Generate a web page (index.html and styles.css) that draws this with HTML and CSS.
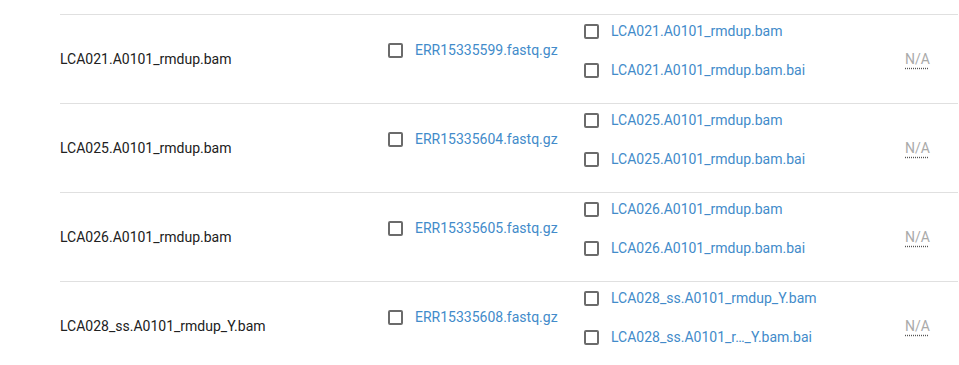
FILE: index.html
```html
<!DOCTYPE html>
<html>
<head>
<meta charset="utf-8">
<link rel="stylesheet" href="styles.css">
</head>
<body>
<div class="table">
  <div class="row">
    <div class="c-name">LCA021.A0101_rmdup.bam</div>
    <div class="c-raw"><div class="item"><span class="box"></span><a class="link">ERR15335599.fastq.gz</a></div></div>
    <div class="c-files">
      <div class="item"><span class="box"></span><a class="link">LCA021.A0101_rmdup.bam</a></div>
      <div class="item"><span class="box"></span><a class="link">LCA021.A0101_rmdup.bam.bai</a></div>
    </div>
    <div class="c-na"><span class="na">N/A</span></div>
  </div>
  <div class="row">
    <div class="c-name">LCA025.A0101_rmdup.bam</div>
    <div class="c-raw"><div class="item"><span class="box"></span><a class="link">ERR15335604.fastq.gz</a></div></div>
    <div class="c-files">
      <div class="item"><span class="box"></span><a class="link">LCA025.A0101_rmdup.bam</a></div>
      <div class="item"><span class="box"></span><a class="link">LCA025.A0101_rmdup.bam.bai</a></div>
    </div>
    <div class="c-na"><span class="na">N/A</span></div>
  </div>
  <div class="row">
    <div class="c-name">LCA026.A0101_rmdup.bam</div>
    <div class="c-raw"><div class="item"><span class="box"></span><a class="link">ERR15335605.fastq.gz</a></div></div>
    <div class="c-files">
      <div class="item"><span class="box"></span><a class="link">LCA026.A0101_rmdup.bam</a></div>
      <div class="item"><span class="box"></span><a class="link">LCA026.A0101_rmdup.bam.bai</a></div>
    </div>
    <div class="c-na"><span class="na">N/A</span></div>
  </div>
  <div class="row">
    <div class="c-name">LCA028_ss.A0101_rmdup_Y.bam</div>
    <div class="c-raw"><div class="item"><span class="box"></span><a class="link">ERR15335608.fastq.gz</a></div></div>
    <div class="c-files">
      <div class="item"><span class="box"></span><a class="link">LCA028_ss.A0101_rmdup_Y.bam</a></div>
      <div class="item"><span class="box"></span><a class="link">LCA028_ss.A0101_r…_Y.bam.bai</a></div>
    </div>
    <div class="c-na"><span class="na">N/A</span></div>
  </div>
</div>
</body>
</html>
```
FILE: styles.css
```css
html, body {
  margin: 0;
  padding: 0;
  background: #fff;
}
body {
  font-family: Roboto, "Liberation Sans", sans-serif;
  font-size: 14px;
  line-height: 20px;
  color: #212121;
  overflow: hidden;
}
.table {
  padding: 14px 1px 0 60px;
}
.row {
  display: flex;
  height: 88px;
  border-top: 1px solid #e0e0e0;
}
.c-name {
  width: 328px;
  display: flex;
  align-items: center;
}
.c-raw {
  width: 196px;
  padding-top: 25px;
  box-sizing: border-box;
}
.c-files {
  width: 321px;
  padding-top: 6px;
  box-sizing: border-box;
  display: flex;
  flex-direction: column;
  gap: 19px;
}
.c-na {
  flex: 1;
  display: flex;
  align-items: center;
}
.item {
  display: flex;
  align-items: center;
  height: 20px;
}
.box {
  width: 15px;
  height: 15px;
  box-sizing: border-box;
  border: 2px solid #6b6b6b;
  border-radius: 2px;
  margin-right: 12px;
  flex: none;
}
.link {
  color: #428bca;
  white-space: nowrap;
}
.na {
  color: #aaaaaa;
  text-decoration: underline dotted #555;
  text-underline-offset: 4px;
}
```
